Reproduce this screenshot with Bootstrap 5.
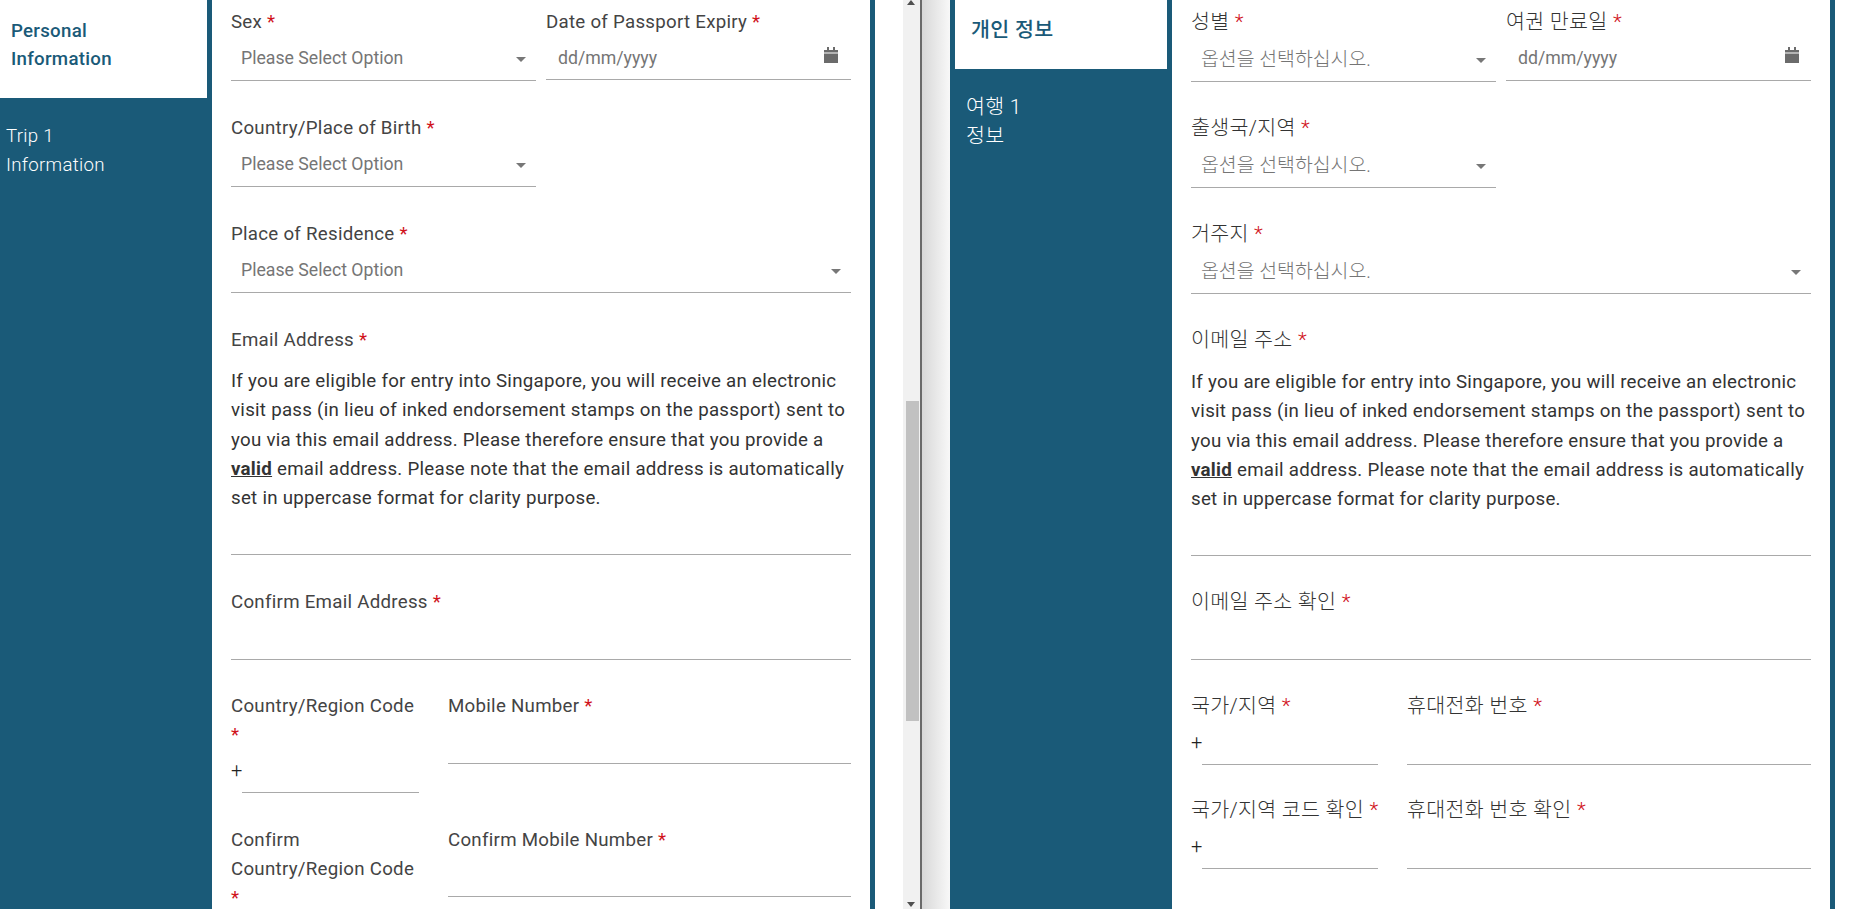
<!doctype html>
<html lang="en"><head><meta charset="utf-8">
<title>Arrival form comparison</title>
<link href="https://cdn.jsdelivr.net/npm/bootstrap@5.3.0/dist/css/bootstrap.min.css" rel="stylesheet">
<style>
html,body{height:909px;overflow:hidden;background:#fff}
body{font-family:Roboto,"Noto Sans CJK KR",sans-serif;font-size:18.7px;letter-spacing:.27px;color:#444}
.stage{height:909px;width:1861px}
.pane-l{width:870px;flex:none}
.pane-r{width:885px;flex:none;border-right:5px solid #1a5a78}
.side{background:#1a5a78;color:#fff;font-weight:300;flex:none}
.rail{width:5px}
.pane-l .side{width:212px}
.pane-r .side{width:222px;padding-left:5px}
.tab-on{background:#fff;color:#1a5a78;font-weight:500;line-height:28px;margin-right:5px}
.pane-l .tab-on{height:98px;padding:17px 0 0 11px}
.pane-r .tab-on{height:69px;padding:16px 0 0 16px}
.tab-off{line-height:29px;margin-top:24px;padding-left:6px}
.pane-r .tab-off{padding-left:11px}
.body-col{flex:1 1 0;min-width:0;padding:8px 19px 0;line-height:29px}
.req{color:#d0121b}
.pair{display:flex;gap:10px}
.pair>*{flex:1 1 0;min-width:0}
.fld{margin-bottom:33px}
.ctrl{height:44px;border-bottom:1px solid #a9a9a9;display:flex;align-items:center;justify-content:space-between;padding:0 10px;color:#757575;font-size:17.7px;letter-spacing:0}
.ctrl.dt{height:43px;padding:0 13px 0 12px}
.ctrl svg{margin-bottom:7px}
.wide-half{width:305px}
.caret-dn{width:0;height:0;border-left:5px solid transparent;border-right:5px solid transparent;border-top:5px solid #777;margin:2px 0 0}
.note{margin:12px 0 0;line-height:29.3px;color:#333;font-size:18.7px}
.note b{font-weight:700;text-decoration:underline}
.line-in{border-bottom:1px solid #a9a9a9}
.mail-in{height:42px}
.conf-in{height:43px}
.conf-in-s{height:42px}
.fld-conf{margin-bottom:33px}
.fld-conf-t{margin-bottom:32px}
.cc{width:188px;flex:none;margin-right:29px}
.mb{flex:1 1 0;min-width:0}
.cc-in{display:flex;align-items:flex-end}
.pf{width:11px;flex:none;line-height:29px;font-size:20px;font-weight:300;color:#222;margin-bottom:8px}
.cc-in .line-in{flex:1 1 0;height:43px}
.scroller{width:17px;flex:none;background:#f1f1f1;margin-left:28px;position:relative}
.thumb{position:absolute;top:401px;left:3px;width:13px;height:320px;background:#c1c1c1}
.arr-u,.arr-d{position:absolute;left:4px;width:0;height:0;border-left:4px solid transparent;border-right:4px solid transparent}
.arr-u{top:0;border-bottom:5px solid #505050}
.arr-d{bottom:2px;border-top:5px solid #505050}
.shade{width:30px;flex:none;border-left:2px solid #6a6a6a;background:linear-gradient(90deg,#d8d8d8,#f8f8f8)}
.ko{font-size:20.6px;letter-spacing:.3px;font-weight:300;color:#333}
.ko .tab-on{font-weight:500}
.ko .ctrl{height:45px;font-size:19.4px;font-weight:300}
.ko .ctrl.dt{height:44px;font-size:17.7px;font-weight:400;padding-right:12px}
.ko .fld{margin-bottom:32px}
.ko .note{margin-top:13px;font-weight:400;letter-spacing:.27px}
.ko .fld-conf{margin-bottom:32px}
.ko .fld-conf-s{margin-bottom:31px}
.ko .cc{white-space:nowrap;width:187px;margin-right:29px}
.ko .cc-in .line-in,.ko .tall{height:44px}
</style></head><body>
<div class="stage d-flex">

<section class="pane-l d-flex overflow-hidden">
  <nav class="side">
    <div class="tab-on">Personal<br>Information</div>
    <div class="tab-off">Trip 1<br>Information</div>
  </nav>
  <form class="body-col">
    <div class="pair fld">
      <div><div>Sex <span class="req">*</span></div><div class="ctrl"><span>Please Select Option</span><i class="caret-dn"></i></div></div>
      <div><div>Date of Passport Expiry <span class="req">*</span></div><div class="ctrl dt"><span>dd/mm/yyyy</span><svg width="14" height="16" viewBox="0 0 14 16" aria-hidden="true"><path fill="#6b6b6b" d="M3 0h2v3H3zM9 0h2v3H9zM0 3h14v2.500H0zM0 6.500h14V16H0z"/></svg></div></div>
    </div>
    <div class="fld"><div>Country/Place of Birth <span class="req">*</span></div><div class="ctrl wide-half"><span>Please Select Option</span><i class="caret-dn"></i></div></div>
    <div class="fld"><div>Place of Residence <span class="req">*</span></div><div class="ctrl"><span>Please Select Option</span><i class="caret-dn"></i></div></div>
    <div class="fld">
      <div>Email Address <span class="req">*</span></div>
      <p class="note">If you are eligible for entry into Singapore, you will receive an electronic visit pass (in lieu of inked endorsement stamps on the passport) sent to you via this email address. Please therefore ensure that you provide a <b>valid</b> email address. Please note that the email address is automatically set in uppercase format for clarity purpose.</p>
      <div class="line-in mail-in"></div>
    </div>
    <div class="fld-conf-t"><div>Confirm Email Address <span class="req">*</span></div><div class="line-in conf-in"></div></div>
    <div class="d-flex fld-conf">
      <div class="cc"><div>Country/Region Code <span class="req">*</span></div><div class="cc-in"><span class="pf">+</span><div class="line-in"></div></div></div>
      <div class="mb"><div>Mobile Number <span class="req">*</span></div><div class="line-in conf-in"></div></div>
    </div>
    <div class="d-flex">
      <div class="cc"><div>Confirm<br>Country/Region Code <span class="req">*</span></div></div>
      <div class="mb"><div>Confirm Mobile Number <span class="req">*</span></div><div class="line-in conf-in-s"></div></div>
    </div>
  </form>
</section>

<div class="side rail"></div>
<aside class="scroller"><i class="arr-u"></i><div class="thumb"></div><i class="arr-d"></i></aside>
<div class="shade"></div>

<section class="pane-r d-flex overflow-hidden ko">
  <nav class="side">
    <div class="tab-on">개인 정보</div>
    <div class="tab-off">여행 1<br>정보</div>
  </nav>
  <form class="body-col">
    <div class="pair fld">
      <div><div>성별 <span class="req">*</span></div><div class="ctrl"><span>옵션을 선택하십시오.</span><i class="caret-dn"></i></div></div>
      <div><div>여권 만료일 <span class="req">*</span></div><div class="ctrl dt"><span>dd/mm/yyyy</span><svg width="14" height="16" viewBox="0 0 14 16" aria-hidden="true"><path fill="#6b6b6b" d="M3 0h2v3H3zM9 0h2v3H9zM0 3h14v2.500H0zM0 6.500h14V16H0z"/></svg></div></div>
    </div>
    <div class="fld"><div>출생국/지역 <span class="req">*</span></div><div class="ctrl wide-half"><span>옵션을 선택하십시오.</span><i class="caret-dn"></i></div></div>
    <div class="fld"><div>거주지 <span class="req">*</span></div><div class="ctrl"><span>옵션을 선택하십시오.</span><i class="caret-dn"></i></div></div>
    <div class="fld">
      <div>이메일 주소 <span class="req">*</span></div>
      <p class="note">If you are eligible for entry into Singapore, you will receive an electronic visit pass (in lieu of inked endorsement stamps on the passport) sent to you via this email address. Please therefore ensure that you provide a <b>valid</b> email address. Please note that the email address is automatically set in uppercase format for clarity purpose.</p>
      <div class="line-in mail-in"></div>
    </div>
    <div class="fld-conf"><div>이메일 주소 확인 <span class="req">*</span></div><div class="line-in conf-in"></div></div>
    <div class="d-flex fld-conf fld-conf-s">
      <div class="cc"><div>국가/지역 <span class="req">*</span></div><div class="cc-in"><span class="pf">+</span><div class="line-in"></div></div></div>
      <div class="mb"><div>휴대전화 번호 <span class="req">*</span></div><div class="line-in tall"></div></div>
    </div>
    <div class="d-flex">
      <div class="cc"><div>국가/지역 코드 확인 <span class="req">*</span></div><div class="cc-in"><span class="pf">+</span><div class="line-in"></div></div></div>
      <div class="mb"><div>휴대전화 번호 확인 <span class="req">*</span></div><div class="line-in tall"></div></div>
    </div>
  </form>
</section>
</div>
<script src="https://cdn.jsdelivr.net/npm/bootstrap@5.3.0/dist/js/bootstrap.bundle.min.js"></script>
</body></html>
